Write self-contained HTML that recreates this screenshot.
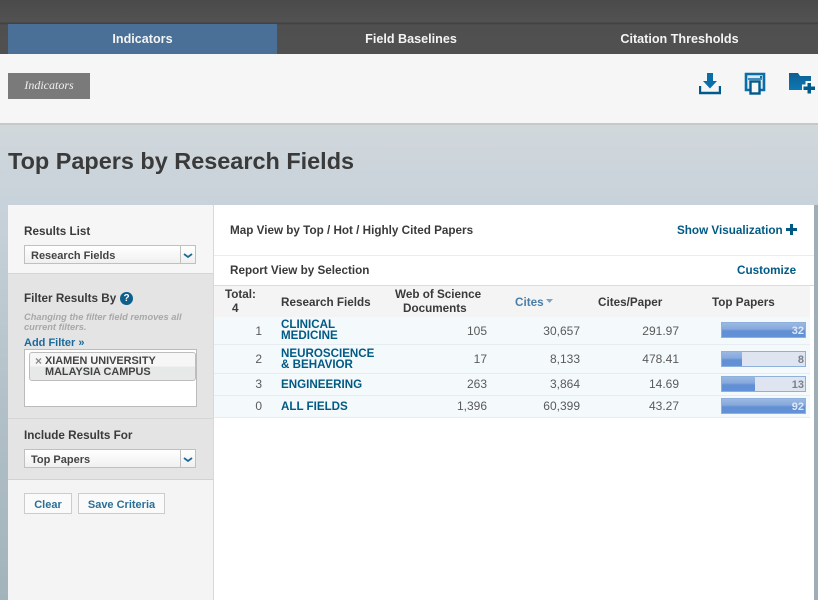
<!DOCTYPE html>
<html><head><meta charset="utf-8"><style>
html,body{margin:0;padding:0;width:818px;height:600px;overflow:hidden}
body{position:relative;font-family:"Liberation Sans",Arial,sans-serif;background:linear-gradient(#d1d8dc 125px,#c8d2da 205px,#b2c1c9 400px,#a3b3bb 600px)}
div,a,svg{position:absolute;white-space:nowrap}
.t{font-size:11.7px;line-height:14px;color:#3a3a3a;font-weight:bold}
.tab{font-size:12.6px;color:#f4f4f4;text-align:center;top:32px}
.l{color:#005a84;font-weight:bold}
.n{font-size:12px;line-height:14px;color:#5a5a5a;text-align:right}
.f{font-size:11.6px;line-height:10.500px;color:#005a84;font-weight:bold;left:281px}
.row{left:214px;width:596px;background:#f4f9fc;border-bottom:1px solid #e6ecef}
.bar{left:721px;width:85px;height:16px;background:#dfe5f0;box-sizing:border-box;border:1px solid #8fb0dc}
.fill{left:0;top:0;height:14px;background:linear-gradient(#9ab8e2 0,#86a9dc 6px,#628fd5 8px,#6191d6 100%)}
.bn{right:1px;top:1px;font-size:11px;line-height:14px;color:#dfe8f5;font-weight:bold}
.sel{left:24px;width:172px;height:19px;box-sizing:border-box;border:1px solid #c0c0c0;background:linear-gradient(#fff,#f0f0f0);font-size:11px;line-height:20px;color:#444;font-weight:bold;padding-left:6px}
.btn{height:21px;box-sizing:border-box;border:1px solid #ccc;background:#fafafa;font-size:11px;line-height:22px;color:#2a6f97;font-weight:bold;text-align:center;top:493px}
</style></head><body>
<div style="left:0;top:0;width:818px;height:54px;background:linear-gradient(#4a4a4a,#525252 22px,#3e3e3e 23px,#4f4f4f 25px,#505050 53px)"></div>
<div style="left:8px;top:24px;width:269px;height:30px;background:#4a7097"></div>
<div class="t tab" style="left:8px;width:269px">Indicators</div>
<div class="t tab" style="left:277px;width:268px">Field Baselines</div>
<div class="t tab" style="left:545px;width:269px">Citation Thresholds</div>
<div style="left:0;top:54px;width:818px;height:69px;background:#f6f6f6;border-bottom:2px solid #c6c8c9"></div>
<div style="left:8px;top:73px;width:82px;height:26px;background:#7a7a7a;font:italic 12px/25px 'Liberation Serif',serif;color:#f0f0f0;text-align:center">Indicators</div>

<svg style="left:699px;top:72px" width="22" height="23" viewBox="0 0 22 23"><path d="M8 1h6v8h4l-7 7.500L4 9h4z" fill="#0a6fa8"/><path d="M1 14v7h20v-7" fill="none" stroke="#005a8c" stroke-width="2.400"/></svg>
<svg style="left:744px;top:72px" width="22" height="23" viewBox="0 0 22 23"><path d="M6 18H2V2h18v16h-4" fill="#dde8f0" stroke="#0a6fa8" stroke-width="2.600"/><rect x="16" y="4" width="2" height="2" fill="#0a6fa8"/><path d="M4 7h14" stroke="#0a6fa8" stroke-width="1.500"/><rect x="6.500" y="9.500" width="9" height="12" fill="#f6f6f6" stroke="#005a8c" stroke-width="2.400"/></svg>
<svg style="left:788px;top:72px" width="30" height="23" viewBox="0 0 30 23"><defs><linearGradient id="g" x1="0" y1="0" x2="0" y2="1"><stop offset="0" stop-color="#0d5f92"/><stop offset="1" stop-color="#0e78b4"/></linearGradient></defs><path d="M1 1h9l2 3h11v14H1z" fill="url(#g)"/><path d="M17.500 9h7v3.500H29v7h-4.500V23h-7v-3.500H14v-7h3.500z" fill="#f6f6f6"/><path d="M19.500 11h3.500v3.500h4v3.500h-4v3.500h-3.500V18H15.500v-3.500h4z" fill="#005a8c"/></svg>

<div style="left:8px;top:146px;font-size:23.450px;line-height:30px;font-weight:bold;color:#3a3a3a">Top Papers by Research Fields</div>

<div style="left:8px;top:205px;width:205px;height:395px;background:#f4f4f4;border-right:1px solid #d8d8d8"></div>
<div style="left:8px;top:205px;width:205px;height:68px;background:#f6f6f6;border-bottom:1px solid #d6d6d6"></div>
<div style="left:8px;top:274px;width:205px;height:144px;background:#e4e4e4;border-bottom:1px solid #d6d6d6"></div>
<div style="left:8px;top:419px;width:205px;height:60px;background:#e4e4e4;border-bottom:1px solid #d2d2d2"></div>

<div class="t" style="left:24px;top:225px">Results List</div>
<div class="sel" style="top:245px">Research Fields</div>
<div style="left:180px;top:245px;width:1px;height:19px;background:#c0c0c0"></div>
<svg style="left:183px;top:253px" width="10" height="6"><path d="M1 1l4 3 4-3" fill="none" stroke="#1d6b96" stroke-width="1.800"/></svg>

<div class="t" style="left:24px;top:292px">Filter Results By</div>
<div style="left:120px;top:292px;width:13px;height:13px;border-radius:50%;background:#0f5f8c;color:#fff;font-size:10px;line-height:13px;font-weight:bold;text-align:center">?</div>
<div style="left:24px;top:312px;font-size:9.300px;line-height:10px;font-style:italic;font-weight:bold;color:#a8a8a8">Changing the filter field removes all<br>current filters.</div>
<div class="l" style="left:24px;top:336px;font-size:11px;line-height:14px;color:#1b6a9b">Add Filter »</div>
<div style="left:24px;top:349px;width:173px;height:58px;box-sizing:border-box;background:#fff;border:1px solid #bbb"></div>
<div style="left:29px;top:352px;width:167px;height:29px;box-sizing:border-box;border:1px solid #bdbdbd;border-radius:3px;background:linear-gradient(#f6f6f6 50%,#e6e9e8 50%)"></div>
<div style="left:35px;top:356px;font-size:12px;line-height:11px;font-weight:bold;color:#8a8a8a">×</div>
<div style="left:45px;top:356px;font-size:10.900px;line-height:11px;font-weight:bold;color:#444">XIAMEN UNIVERSITY<br>MALAYSIA CAMPUS</div>

<div class="t" style="left:24px;top:429px">Include Results For</div>
<div class="sel" style="top:449px">Top Papers</div>
<div style="left:180px;top:449px;width:1px;height:19px;background:#c0c0c0"></div>
<svg style="left:183px;top:457px" width="10" height="6"><path d="M1 1l4 3 4-3" fill="none" stroke="#1d6b96" stroke-width="1.800"/></svg>
<div class="btn" style="left:24px;width:48px">Clear</div>
<div class="btn" style="left:78px;width:87px">Save Criteria</div>

<div style="left:214px;top:205px;width:600px;height:395px;background:#fff"></div>
<div style="left:814px;top:205px;width:4px;height:395px;background:#9fadb4"></div>
<div style="left:214px;top:255px;width:600px;height:1px;background:#ececec"></div>
<div style="left:214px;top:285px;width:600px;height:1px;background:#dcdcdc"></div>
<div class="t" style="left:230px;top:224px">Map View by Top / Hot / Highly Cited Papers</div>
<div class="t l" style="left:677px;top:224px;color:#005a84">Show Visualization</div>
<svg style="left:786px;top:224px" width="11" height="11"><path d="M4 0h3v4h4v3H7v4H4V7H0V4h4z" fill="#005a84"/></svg>
<div class="t" style="left:230px;top:264px">Report View by Selection</div>
<div class="t l" style="left:737px;top:264px;color:#005a84">Customize</div>

<div style="left:214px;top:286px;width:596px;height:31px;background:#f4f4f4"></div>
<div class="t" style="left:225px;top:288px">Total:</div>
<div class="t" style="left:232px;top:302px">4</div>
<div class="t" style="left:281px;top:296px">Research Fields</div>
<div class="t" style="left:395px;top:288px">Web of Science</div>
<div class="t" style="left:403px;top:302px">Documents</div>
<div class="t" style="left:515px;top:296px;color:#4a7ea6">Cites</div>
<svg style="left:546px;top:299px" width="7" height="4"><path d="M0 0h7L3.500 4z" fill="#7aa5c9"/></svg>
<div class="t" style="left:598px;top:296px">Cites/Paper</div>
<div class="t" style="left:712px;top:296px">Top Papers</div>

<div class="row" style="top:317px;height:27px"></div>
<div class="row" style="top:345px;height:28px"></div>
<div class="row" style="top:374px;height:21px"></div>
<div class="row" style="top:396px;height:21px"></div>

<div class="n" style="left:240px;width:22px;top:324px">1</div>
<div class="f" style="top:320px">CLINICAL<br>MEDICINE</div>
<div class="n" style="left:430px;width:57px;top:324px">105</div>
<div class="n" style="left:520px;width:60px;top:324px">30,657</div>
<div class="n" style="left:620px;width:59px;top:324px">291.97</div>
<div class="bar" style="top:322px"><div class="fill" style="width:83px"></div><div class="bn">32</div></div>

<div class="n" style="left:240px;width:22px;top:352px">2</div>
<div class="f" style="top:348px;line-height:11px">NEUROSCIENCE<br>&amp; BEHAVIOR</div>
<div class="n" style="left:430px;width:57px;top:352px">17</div>
<div class="n" style="left:520px;width:60px;top:352px">8,133</div>
<div class="n" style="left:620px;width:59px;top:352px">478.41</div>
<div class="bar" style="top:351px"><div class="fill" style="width:20px"></div><div class="bn" style="color:#7a7f8c">8</div></div>

<div class="n" style="left:240px;width:22px;top:377px">3</div>
<div class="f" style="top:379px;line-height:11px">ENGINEERING</div>
<div class="n" style="left:430px;width:57px;top:377px">263</div>
<div class="n" style="left:520px;width:60px;top:377px">3,864</div>
<div class="n" style="left:620px;width:59px;top:377px">14.69</div>
<div class="bar" style="top:376px"><div class="fill" style="width:33px"></div><div class="bn" style="color:#7a7f8c">13</div></div>

<div class="n" style="left:240px;width:22px;top:399px">0</div>
<div class="f" style="top:401px;line-height:11px">ALL FIELDS</div>
<div class="n" style="left:430px;width:57px;top:399px">1,396</div>
<div class="n" style="left:520px;width:60px;top:399px">60,399</div>
<div class="n" style="left:620px;width:59px;top:399px">43.27</div>
<div class="bar" style="top:398px"><div class="fill" style="width:83px"></div><div class="bn">92</div></div>
</body></html>
